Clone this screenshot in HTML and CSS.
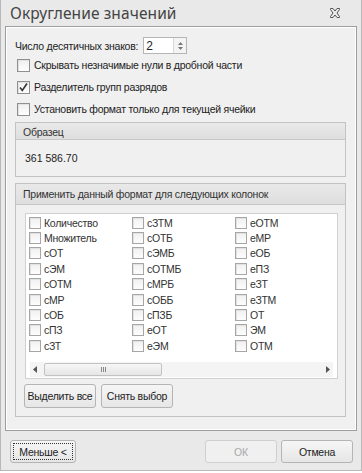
FILE: index.html
```html
<!DOCTYPE html>
<html lang="ru">
<head>
<meta charset="utf-8">
<title>Округление значений</title>
<link rel="stylesheet" href="styles.css">
</head>
<body>
<div class="window">
  <div class="titlebar">
    <span class="title">Округление значений</span>
    <svg class="close" width="12" height="10" viewBox="0 0 12 10">
      <path d="M1.5 0.5 H4 L6 3 L8 0.5 H10.5 V1.5 L8 5 L10.5 8.5 V9.5 H8 L6 7 L4 9.5 H1.5 V8.5 L4 5 L1.5 1.5 Z" fill="none" stroke="#555" stroke-width="1"/>
    </svg>
  </div>
  <div class="panel">
    <div class="digits-row">
      <span class="digits-label">Число десятичных знаков:</span>
      <div class="spin">
        <span class="spin-value">2</span>
        <span class="spin-btns">
          <svg width="5" height="3" viewBox="0 0 5 3"><path d="M0 3 L2.5 0 L5 3 Z" fill="#777"/></svg>
          <svg width="5" height="3" viewBox="0 0 5 3"><path d="M0 0 L2.5 3 L5 0 Z" fill="#777"/></svg>
        </span>
      </div>
    </div>
    <div class="opt"><span class="cb"></span><span>Скрывать незначимые нули в дробной части</span></div>
    <div class="opt"><span class="cb"><svg width="11" height="11" viewBox="0 0 11 11"><path d="M2 5.5 L4.3 8.5 L9 1.5" fill="none" stroke="#333" stroke-width="1.6"/></svg></span><span>Разделитель групп разрядов</span></div>
    <div class="opt"><span class="cb"></span><span>Установить формат только для текущей ячейки</span></div>

    <div class="group sample">
      <div class="group-head head-sm">Образец</div>
      <div class="sample-value">361 586.70</div>
    </div>

    <div class="group columns">
      <div class="group-head head-lg">Применить данный формат для следующих колонок</div>
      <div class="listbox">
        <div class="items">
          <div class="item"><span class="cb small"></span>Количество</div>
          <div class="item"><span class="cb small"></span>Множитель</div>
          <div class="item"><span class="cb small"></span>сОТ</div>
          <div class="item"><span class="cb small"></span>сЭМ</div>
          <div class="item"><span class="cb small"></span>сОТМ</div>
          <div class="item"><span class="cb small"></span>сМР</div>
          <div class="item"><span class="cb small"></span>сОБ</div>
          <div class="item"><span class="cb small"></span>сПЗ</div>
          <div class="item"><span class="cb small"></span>сЗТ</div>
          <div class="item"><span class="cb small"></span>сЗТМ</div>
          <div class="item"><span class="cb small"></span>сОТБ</div>
          <div class="item"><span class="cb small"></span>сЭМБ</div>
          <div class="item"><span class="cb small"></span>сОТМБ</div>
          <div class="item"><span class="cb small"></span>сМРБ</div>
          <div class="item"><span class="cb small"></span>сОББ</div>
          <div class="item"><span class="cb small"></span>сПЗБ</div>
          <div class="item"><span class="cb small"></span>еОТ</div>
          <div class="item"><span class="cb small"></span>еЭМ</div>
          <div class="item"><span class="cb small"></span>еОТМ</div>
          <div class="item"><span class="cb small"></span>еМР</div>
          <div class="item"><span class="cb small"></span>еОБ</div>
          <div class="item"><span class="cb small"></span>еПЗ</div>
          <div class="item"><span class="cb small"></span>еЗТ</div>
          <div class="item"><span class="cb small"></span>еЗТМ</div>
          <div class="item"><span class="cb small"></span>ОТ</div>
          <div class="item"><span class="cb small"></span>ЭМ</div>
          <div class="item"><span class="cb small"></span>ОТМ</div>
        </div>
        <div class="hscroll">
          <svg class="arrow" width="4" height="7" viewBox="0 0 4 7"><path d="M4 0 L0 3.5 L4 7 Z" fill="#555"/></svg>
          <div class="thumb"><span class="grip"></span><span class="grip"></span><span class="grip"></span></div>
          <span class="track"></span>
          <svg class="arrow" width="4" height="7" viewBox="0 0 4 7"><path d="M0 0 L4 3.5 L0 7 Z" fill="#555"/></svg>
        </div>
      </div>
      <div class="btn-row">
        <button class="btn">Выделить все</button>
        <button class="btn">Снять выбор</button>
      </div>
    </div>
  </div>
  <div class="footer">
    <button class="btn foot-btn focused"><span class="focus-ring">Меньше &lt;</span></button>
    <span class="spacer"></span>
    <button class="btn foot-btn disabled">ОК</button>
    <button class="btn foot-btn">Отмена</button>
  </div>
</div>
</body>
</html>
```

FILE: styles.css
```css
* { box-sizing: border-box; }
html, body { margin: 0; padding: 0; }
body {
  width: 362px;
  height: 473px;
  background: #ffffff;
  font-family: "Liberation Sans", Arial, sans-serif;
  font-size: 10.5px;
  letter-spacing: -0.25px;
  color: #222;
}
.window {
  width: 362px;
  height: 471px;
  background: #e9e9e9;
  border: 1px solid #b8b8b8;
  border-top: none;
  display: flex;
  flex-direction: column;
}
.titlebar {
  height: 26px;
  display: flex;
  align-items: center;
  padding: 0 20px 0 9px;
}
.title {
  font-family: "Noto Sans", sans-serif;
  font-size: 15.5px;
  color: #444;
  flex: 1;
  letter-spacing: 0.1px;
}
.close { display: block; }

.panel {
  margin: 0 4px;
  height: 405px;
  background: #f0f0f0;
  border: 1px solid #9d9d9d;
  box-shadow: inset 1px 1px 0 #ffffff, inset -1px -1px 0 #ffffff;
  padding: 10px 10px 0 9px;
  display: flex;
  flex-direction: column;
}
.digits-row {
  display: flex;
  align-items: center;
  height: 17px;
  gap: 5px;
}
.spin {
  width: 44px;
  height: 17px;
  background: #fff;
  border: 1px solid #b5b5b5;
  display: flex;
  align-items: center;
}
.spin-value { flex: 1; padding-left: 2px; font-size: 12px; }
.spin-btns {
  width: 13px;
  height: 15px;
  border-left: 1px solid #d8d8d8;
  background: #f4f4f4;
  display: flex;
  flex-direction: column;
  align-items: center;
  justify-content: center;
  gap: 2px;
}
.spin-btns svg { display: block; }

.opt {
  height: 22px;
  display: flex;
  align-items: center;
  gap: 4px;
  padding-left: 2px;
  white-space: nowrap;
}
.opt:first-of-type { margin-top: 6px; }
.cb {
  width: 13px;
  height: 13px;
  border: 1px solid #8f8f8f;
  background: linear-gradient(#f0f0f0, #fdfdfd);
  box-shadow: inset 1px 1px 0 #e2e2e2;
  display: inline-flex;
  align-items: center;
  justify-content: center;
  flex: none;
}
.cb svg { display: block; }
.cb.small { width: 12px; height: 12px; border-color: #a6a6a6; }

.group {
  border: 1px solid #c3c3c3;
  background: #f0f0f0;
  display: flex;
  flex-direction: column;
}
.sample { margin-top: 2px; height: 55px; }
.group-head {
  background: linear-gradient(#e9e9e9, #dedede);
  border-bottom: 1px solid #c8c8c8;
  padding-left: 7px;
  display: flex;
  align-items: center;
  color: #333;
  white-space: nowrap;
}
.head-sm { height: 17px; padding-top: 2px; }
.head-lg { height: 21px; }
.sample-value {
  padding-left: 9px;
  height: 35px;
  display: flex;
  align-items: center;
  padding-top: 1px;
  letter-spacing: 0;
}
.columns { margin-top: 6px; height: 234px; }
.listbox {
  margin: 8px 7px 0 9px;
  height: 166px;
  background: #ffffff;
  border: 1px solid #d0d0d0;
  display: flex;
  flex-direction: column;
}
.items {
  display: grid;
  grid-auto-flow: column;
  grid-template-rows: repeat(9, 15.4px);
  grid-template-columns: repeat(3, 103px);
  padding: 1px 0 0 3px;
  flex: 1;
}
.item {
  display: flex;
  align-items: center;
  gap: 3px;
  color: #333;
  white-space: nowrap;
}
.hscroll {
  height: 15px;
  margin: 0 4px 1px 4px;
  display: flex;
  align-items: center;
  gap: 4px;
  background: #f4f4f4;
}
.hscroll .arrow { display: block; flex: none; margin: 0 3px; }
.thumb {
  width: 118px;
  height: 13px;
  border: 1px solid #c2c2c2;
  border-radius: 2px;
  background: linear-gradient(#f6f6f6, #e6e6e6);
  display: flex;
  justify-content: center;
  align-items: center;
  gap: 1px;
}
.grip { width: 1px; height: 5px; background: #888; }
.track { flex: 1; }

.btn-row {
  display: flex;
  gap: 5px;
  margin: 5px 0 0 8px;
}
.btn {
  font-family: inherit;
  font-size: 10.5px;
  letter-spacing: -0.25px;
  color: #222;
  height: 24px;
  width: 72px;
  padding: 0;
  border: 1px solid #b4b4b4;
  border-radius: 3px;
  background: linear-gradient(#f6f6f6, #e6e6e6);
  white-space: nowrap;
}
.footer {
  display: flex;
  align-items: center;
  padding: 9px 8px 0 9px;
  gap: 4px;
}
.foot-btn { height: 23px; }
.focused { width: 66px; padding: 2px; }
.focus-ring {
  display: flex;
  align-items: center;
  justify-content: center;
  height: 100%;
  border: 1px dotted #333;
}
.spacer { flex: 1; }
.disabled { color: #a8a8a8; border-color: #cfcfcf; background: #f0f0f0; }
```
